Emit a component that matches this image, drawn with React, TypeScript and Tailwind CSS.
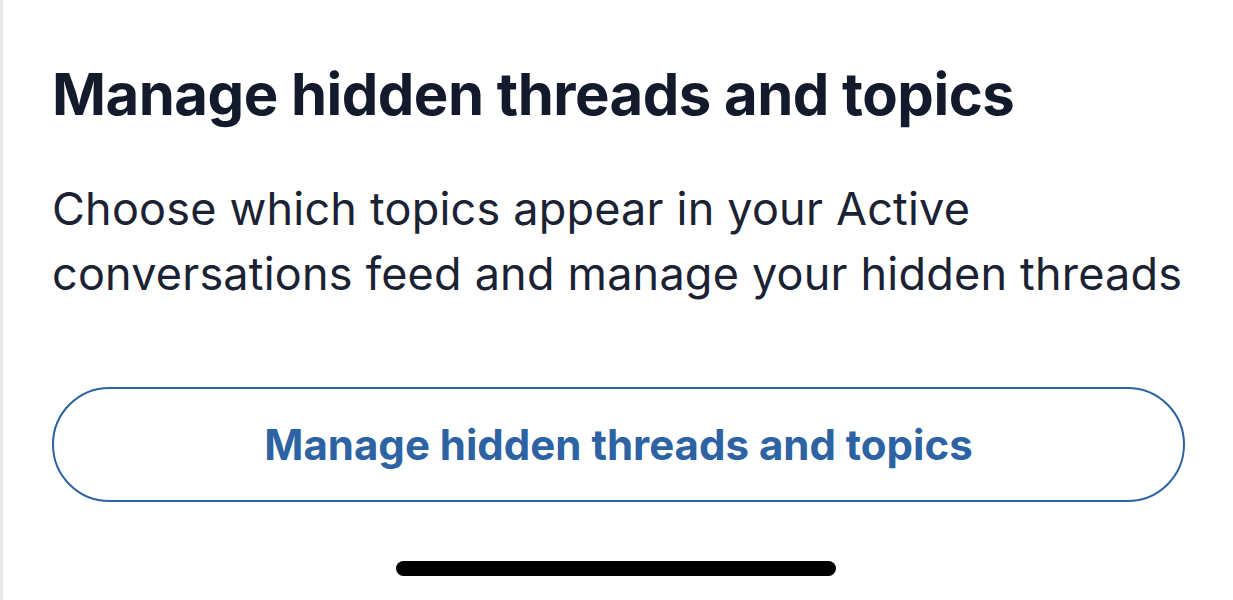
import React from "react";

export default function App() {
  return (
    <div
      className="relative h-[600px] w-[1233px] overflow-hidden bg-white"
      style={{ fontFamily: "Inter, 'Noto Sans', sans-serif" }}
    >
      <div className="flex h-full border-l-[3px] border-[#e5e7eb]">
        <div className="flex flex-1 flex-col pl-[49px] pr-[20px] pt-[59px]">
          {/* -------- HEADING -------- */}
          <h1 className="text-[58px] font-bold leading-[70px] tracking-[-0.5px] text-[#121a2b]">
            Manage hidden threads and topics
          </h1>

          {/* -------- DESCRIPTION -------- */}
          <p className="mt-[47px] text-[45px] leading-[65px] tracking-[0.2px] text-[#1a2233]">
            Choose which topics appear in your Active conversations feed and
            manage your hidden threads
          </p>

          {/* -------- BUTTON -------- */}
          <button className="mr-[28px] mt-[81px] flex h-[115px] items-center justify-center rounded-full border-2 border-[#2d62a3] text-[42px] font-bold text-[#2d62a3]">
            Manage hidden threads and topics
          </button>

          {/* -------- HOME INDICATOR -------- */}
          <div className="mr-[34px] mt-[59px] flex justify-center">
            <div className="h-[15px] w-[440px] rounded-full bg-black" />
          </div>
        </div>
      </div>
    </div>
  );
}
